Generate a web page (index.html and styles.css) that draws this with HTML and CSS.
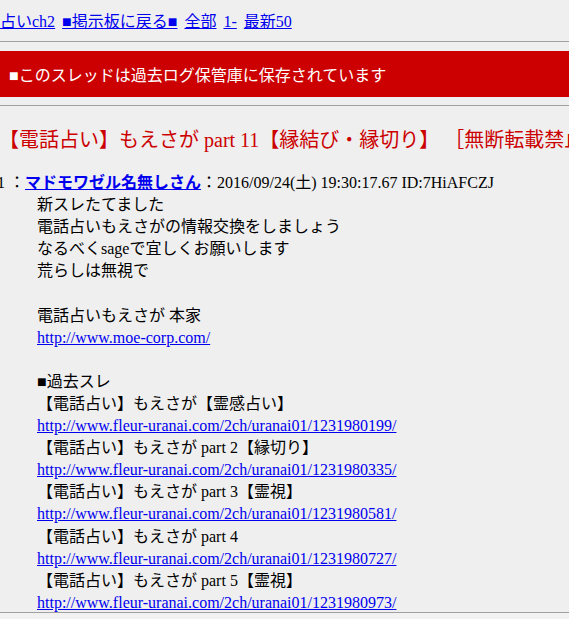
FILE: index.html
```html
<!DOCTYPE html>
<html lang="ja">
<head>
<meta charset="utf-8">
<title>【電話占い】もえさが part 11</title>
<link rel="stylesheet" href="styles.css">
</head>
<body>
<div class="nav">
  <a href="#">占いch2</a>
  <a href="#">■掲示板に戻る■</a>
  <a href="#">全部</a>
  <a href="#">1-</a>
  <a href="#">最新50</a>
</div>
<hr class="rule">
<div class="notice">■このスレッドは過去ログ保管庫に保存されています</div>
<hr class="rule">
<h1 class="title">【電話占い】もえさが part 11【縁結び・縁切り】 ［無断転載禁止］©2ch.net</h1>
<dl class="thread">
  <dt class="post-head"><span class="num">1</span> ：<a class="name" href="#"><b>マドモワゼル名無しさん</b></a>：2016/09/24(土) 19:30:17.67 ID:7HiAFCZJ</dt>
  <dd class="post-body">新スレたてました<br>電話占いもえさがの情報交換をしましょう<br>なるべくsageで宜しくお願いします<br>荒らしは無視で<br><br>電話占いもえさが 本家<br><a href="#">http://www.moe-corp.com/</a><br><br>■過去スレ<br>【電話占い】もえさが【霊感占い】<br><a href="#">http://www.fleur-uranai.com/2ch/uranai01/1231980199/</a><br>【電話占い】もえさが part 2【縁切り】<br><a href="#">http://www.fleur-uranai.com/2ch/uranai01/1231980335/</a><br>【電話占い】もえさが part 3【霊視】<br><a href="#">http://www.fleur-uranai.com/2ch/uranai01/1231980581/</a><br>【電話占い】もえさが part 4<br><a href="#">http://www.fleur-uranai.com/2ch/uranai01/1231980727/</a><br>【電話占い】もえさが part 5【霊視】<br><a href="#">http://www.fleur-uranai.com/2ch/uranai01/1231980973/</a><br>【電話占い】もえさが part 6【霊視】<br><a href="#">http://www.fleur-uranai.com/2ch/uranai01/1231981111/</a></dd>
</dl>
<div class="hscroll"></div>
</body>
</html>
```
FILE: styles.css
```css
html, body {
  margin: 0;
  padding: 0;
  background: #efefef;
  overflow: hidden;
}
body {
  font-family: "Liberation Serif", "Noto Sans CJK JP", serif;
  font-size: 16px;
  color: #000;
  white-space: nowrap;
}
a {
  color: #0000ee;
}
.nav {
  display: flex;
  gap: 7px;
  padding-top: 11px;
  line-height: 22px;
}
.rule {
  margin: 0;
  border: 0;
  height: 0;
  border-top: 1px solid #a0a0a0;
}
.nav + .rule {
  margin-top: 8px;
}
.notice {
  margin: 9px 0 8px;
  height: 46px;
  display: flex;
  align-items: center;
  padding-left: 9px;
  background: #cc0000;
  color: #fff;
}
.title {
  margin: 20px 0 0 -1px;
  font-size: 20px;
  font-weight: normal;
  line-height: 28px;
  color: #cc0000;
}
.thread {
  margin: 18px 0 0;
  line-height: 22.1px;
}
.post-head {
  margin-left: -3px;
}
.name {
  color: #0000ee;
}
.post-body {
  margin: 0 0 0 37px;
}
.hscroll {
  position: fixed;
  left: 0;
  right: 0;
  bottom: 0;
  height: 6px;
  border-top: 1px solid #a0a0a0;
  background: #f2f2f2;
}
```
